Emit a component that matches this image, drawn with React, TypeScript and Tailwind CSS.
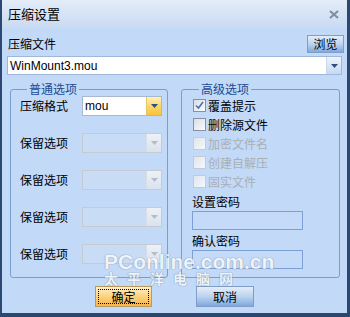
import React from 'react'

const FONT = { fontFamily: '"Noto Sans CJK SC", "Liberation Sans", sans-serif' }
const LATIN = { fontFamily: '"Liberation Sans", "DejaVu Sans", sans-serif' }

function Arrow({ color = '#2c4f86' }: { color?: string }) {
  return (
    <svg width="7" height="4" viewBox="0 0 7 4">
      <path d="M0 0 H7 L3.5 4 Z" fill={color} />
    </svg>
  )
}

function Select({ value, disabled }: { value?: string; disabled?: boolean }) {
  if (disabled) {
    return (
      <div className="flex h-[20px] w-[80px] border border-[#c6cbd2] bg-[#c8dcf6]">
        <div className="flex-1" />
        <div className="flex w-[15px] items-center justify-center border-l border-[#d6dde6] bg-gradient-to-b from-[#eef2f7] to-[#d9e2ee]">
          <Arrow color="#b4bcc6" />
        </div>
      </div>
    )
  }
  return (
    <div className="flex h-[20px] w-[80px] border border-[#a7b8cf] bg-white">
      <div className="flex flex-1 items-center pl-[2px] text-[12px] text-black" style={LATIN}>
        {value}
      </div>
      <div className="flex w-[15px] items-center justify-center border-l border-[#e8c56a] bg-gradient-to-b from-[#fff1b8] via-[#fcd667] to-[#f8c23c]">
        <Arrow />
      </div>
    </div>
  )
}

function Check({ label, checked, disabled }: { label: string; checked?: boolean; disabled?: boolean }) {
  return (
    <div className="flex h-[19px] items-center gap-[2px]">
      <div
        className={`flex h-[13px] w-[13px] items-center justify-center border ${
          disabled
            ? 'border-[#c4cbd3] bg-gradient-to-br from-[#dfe6ee] to-[#f6f8fb]'
            : 'border-[#8592a3] bg-gradient-to-br from-[#d9dee4] to-[#fbfbfc]'
        }`}
      >
        {checked && (
          <svg width="9" height="9" viewBox="0 0 9 9">
            <path d="M1 4.5 L3.5 7 L8 1" stroke="#4a6fb0" strokeWidth="1.6" fill="none" />
          </svg>
        )}
      </div>
      <span className={`text-[12px] leading-none ${disabled ? 'text-[#a9afb6]' : 'text-black'}`}>{label}</span>
    </div>
  )
}

export default function App() {
  return (
    <div
      className="relative flex h-[317px] w-[350px] flex-col overflow-hidden border-b-[4px] border-l-[2px] border-r-[3px] border-b-[#2b4870] border-l-[#2b4870] border-r-[#2b4870] bg-[#c2d9f7]"
      style={FONT}
    >
      {/* title bar */}
      <div className="flex h-[28px] shrink-0 items-center justify-between bg-gradient-to-b from-[#e3ecf8] to-[#c9dbf2] pl-[6px] pr-[8px]">
        <span className="text-[13px] text-black">压缩设置</span>
        <svg width="10" height="9" viewBox="0 0 10 9">
          <path d="M1 1 L9 8 M9 1 L1 8" stroke="#7d8fa8" strokeWidth="2.2" />
        </svg>
      </div>

      <div className="flex flex-1 flex-col px-[5px]">
        {/* file row */}
        <div className="mt-[7px] flex h-[18px] items-center justify-between">
          <span className="ml-[1px] text-[12px] text-black">压缩文件</span>
          <button className="mr-[-2px] flex h-[18px] w-[37px] items-center justify-center border border-[#7f9dc6] bg-gradient-to-b from-[#e4eefa] via-[#bcd3ee] to-[#7fa9dc] text-[12px] text-black">
            浏览
          </button>
        </div>
        <div className="mt-[3px] flex h-[19px] border border-[#9fb7d8] bg-white">
          <div className="flex flex-1 items-center pl-[2px] text-[12px] text-black" style={LATIN}>
            WinMount3.mou
          </div>
          <div className="flex w-[15px] items-center justify-center border-l border-[#c8d8ee] bg-gradient-to-b from-[#eef4fc] to-[#c6d9f2]">
            <Arrow />
          </div>
        </div>

        {/* groups */}
        <div className="mt-[7px] flex">
          <fieldset className="ml-[3px] h-[196px] w-[158px] rounded-[3px] border border-[#7a9dd0] pl-[9px] pr-[5px]">
            <legend className="ml-[7px] px-[2px] text-[12px] leading-[14px] text-[#1d4a92]">普通选项</legend>
            <div className="flex flex-col gap-[17px]">
              <div className="flex h-[20px] items-center justify-between">
                <span className="text-[12px] text-black">压缩格式</span>
                <Select value="mou" />
              </div>
              {[0, 1, 2, 3].map((i) => (
                <div key={i} className="flex h-[20px] items-center justify-between">
                  <span className="text-[12px] text-black">保留选项</span>
                  <Select disabled />
                </div>
              ))}
            </div>
          </fieldset>

          <fieldset className="ml-[13px] h-[196px] w-[159px] rounded-[3px] border border-[#7a9dd0] pl-[10px]">
            <legend className="ml-[7px] px-[2px] text-[12px] leading-[14px] text-[#1d4a92]">高级选项</legend>
            <div className="flex flex-col pl-[1px]">
              <Check label="覆盖提示" checked />
              <Check label="删除源文件" />
              <Check label="加密文件名" disabled />
              <Check label="创建自解压" disabled />
              <Check label="固实文件" disabled />
            </div>
            <div className="mt-[2px] flex h-[18px] items-center text-[12px] text-black">设置密码</div>
            <div className="h-[19px] w-[111px] border border-[#7aa0d6] bg-[#c4daf8]" />
            <div className="mt-[2px] flex h-[18px] items-center text-[12px] text-black">确认密码</div>
            <div className="h-[19px] w-[111px] border border-[#7aa0d6] bg-[#c4daf8]" />
          </fieldset>
        </div>

        {/* buttons */}
        <div className="mt-[8px] flex">
          <button className="ml-[88px] flex h-[21px] w-[57px] items-center justify-center border border-[#b99b5e] bg-gradient-to-b from-[#fff0c4] via-[#fcd27e] to-[#f6b54a] p-[2px]">
            <span className="flex h-full w-full items-center justify-center border border-dotted border-black text-[12px] text-black">
              确定
            </span>
          </button>
          <button className="ml-[44px] flex h-[21px] w-[58px] items-center justify-center border border-[#7f9dc6] bg-gradient-to-b from-[#e4eefa] via-[#bcd3ee] to-[#7fa9dc] text-[12px] text-black">
            取消
          </button>
        </div>
      </div>

      {/* watermark */}
      <div className="pointer-events-none absolute left-[102px] top-[252px] flex flex-col items-start whitespace-nowrap opacity-70">
        <span
          className="h-[19px] text-[21px] font-bold leading-[19px] text-white"
          style={{ ...LATIN, textShadow: '0 0 1px #6b7a8c, 0 0 1px #6b7a8c' }}
        >
          PConline.com.cn
        </span>
        <span
          className="h-[15px] text-[14px] font-bold leading-[15px] tracking-[9px] text-white"
          style={{ textShadow: '0 0 1px #6b7a8c, 0 0 1px #6b7a8c' }}
        >
          太平洋电脑网
        </span>
      </div>
    </div>
  )
}
